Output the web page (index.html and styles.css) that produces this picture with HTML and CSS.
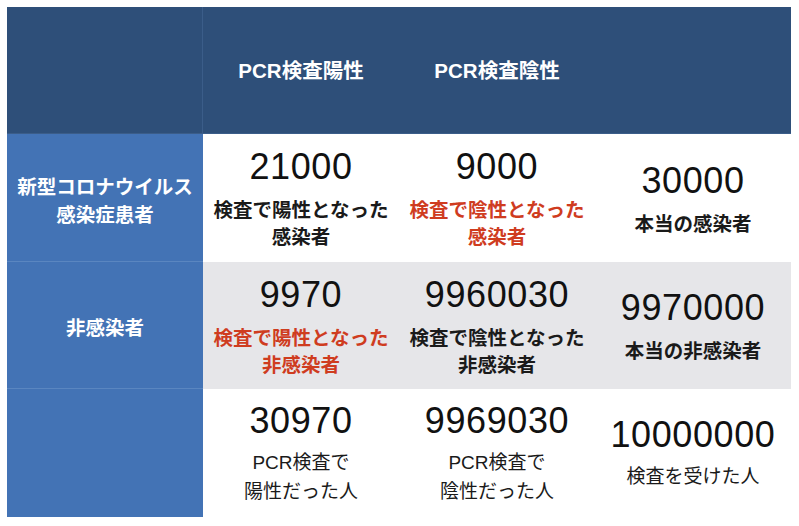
FILE: index.html
```html
<!DOCTYPE html>
<html lang="ja">
<head>
<meta charset="utf-8">
<link rel="stylesheet" href="styles.css">
</head>
<body>
<div class="table">
  <div class="cell head first"></div>
  <div class="cell head"><span class="htext">PCR検査陽性</span></div>
  <div class="cell head"><span class="htext">PCR検査陰性</span></div>
  <div class="cell head"></div>

  <div class="cell side"><span class="stext">新型コロナウイルス<br>感染症患者</span></div>
  <div class="cell white"><span class="num">21000</span><span class="lbl">検査で陽性となった<br>感染者</span></div>
  <div class="cell white"><span class="num">9000</span><span class="lbl red">検査で陰性となった<br>感染者</span></div>
  <div class="cell white"><span class="num">30000</span><span class="lbl">本当の感染者</span></div>

  <div class="cell side"><span class="stext">非感染者</span></div>
  <div class="cell gray"><span class="num">9970</span><span class="lbl red">検査で陽性となった<br>非感染者</span></div>
  <div class="cell gray"><span class="num">9960030</span><span class="lbl">検査で陰性となった<br>非感染者</span></div>
  <div class="cell gray"><span class="num">9970000</span><span class="lbl">本当の非感染者</span></div>

  <div class="cell side last"></div>
  <div class="cell white"><span class="num">30970</span><span class="lbl reg">PCR検査で<br>陽性だった人</span></div>
  <div class="cell white"><span class="num">9969030</span><span class="lbl reg">PCR検査で<br>陰性だった人</span></div>
  <div class="cell white"><span class="num">10000000</span><span class="lbl reg">検査を受けた人</span></div>
</div>
</body>
</html>
```
FILE: styles.css
```css
html, body {
  margin: 0;
  padding: 0;
  background: #ffffff;
}
body {
  padding: 7px;
  font-family: "Liberation Sans", "Noto Sans CJK JP", sans-serif;
}
.table {
  width: 784px;
  height: 510px;
  display: grid;
  grid-template-columns: 196px 196px 196px 196px;
  grid-template-rows: 127px 128px 127px 128px;
}
.cell {
  display: flex;
  flex-direction: column;
  align-items: center;
  justify-content: center;
  text-align: center;
  box-sizing: border-box;
}
.head {
  background: #2e4f79;
  border-bottom: 1px solid #3b5d89;
}
.head.first {
  border-right: 1px solid #3b5d89;
}
.side {
  background: #4373b5;
  border-bottom: 1px solid #5a86c0;
}
.side.last {
  border-bottom: none;
}
.white { background: #ffffff; }
.gray { background: #e6e6e9; }
.htext {
  color: #ffffff;
  font-family: "Liberation Sans", "Noto Sans CJK JP", sans-serif;
  font-weight: bold;
  font-size: 20.5px;
  padding-bottom: 2px;
}
.stext {
  color: #ffffff;
  font-family: "Noto Sans CJK JP", sans-serif;
  font-weight: bold;
  font-size: 19.5px;
  line-height: 28px;
  margin-top: 4px;
}
.num {
  font-family: "Liberation Sans", sans-serif;
  font-size: 36px;
  letter-spacing: 0.6px;
  line-height: 40px;
  color: #111111;
}
.lbl {
  font-family: "Noto Sans CJK JP", sans-serif;
  font-weight: bold;
  font-size: 19.5px;
  line-height: 27px;
  color: #1a1a1a;
  margin-top: 8px;
}
.lbl.red { color: #cf3c1f; }
.lbl.reg {
  font-weight: normal;
  font-family: "Liberation Sans", "Noto Sans CJK JP", sans-serif;
  font-size: 19px;
  line-height: 29px;
  margin-top: 7px;
}
```
